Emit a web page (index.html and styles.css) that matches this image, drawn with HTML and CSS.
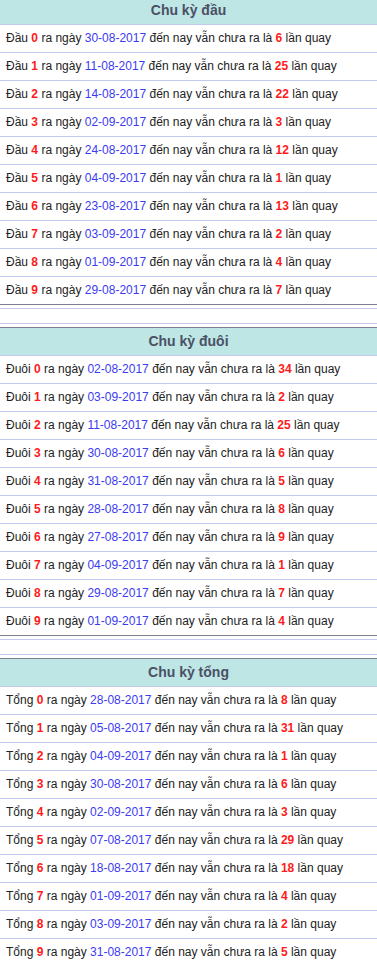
FILE: index.html
```html
<!DOCTYPE html>
<html lang="vi">
<head>
<meta charset="utf-8">
<title>Chu kỳ</title>
<link rel="stylesheet" href="styles.css">
</head>
<body>
<div class="page">
  <section class="cycle">
    <div class="cycle-head">Chu kỳ đầu</div>
    <div class="row">Đầu <b class="num">0</b> ra ngày <span class="date">30-08-2017</span> đến nay vẫn chưa ra là <b class="num">6</b> lần quay</div>
    <div class="row">Đầu <b class="num">1</b> ra ngày <span class="date">11-08-2017</span> đến nay vẫn chưa ra là <b class="num">25</b> lần quay</div>
    <div class="row">Đầu <b class="num">2</b> ra ngày <span class="date">14-08-2017</span> đến nay vẫn chưa ra là <b class="num">22</b> lần quay</div>
    <div class="row">Đầu <b class="num">3</b> ra ngày <span class="date">02-09-2017</span> đến nay vẫn chưa ra là <b class="num">3</b> lần quay</div>
    <div class="row">Đầu <b class="num">4</b> ra ngày <span class="date">24-08-2017</span> đến nay vẫn chưa ra là <b class="num">12</b> lần quay</div>
    <div class="row">Đầu <b class="num">5</b> ra ngày <span class="date">04-09-2017</span> đến nay vẫn chưa ra là <b class="num">1</b> lần quay</div>
    <div class="row">Đầu <b class="num">6</b> ra ngày <span class="date">23-08-2017</span> đến nay vẫn chưa ra là <b class="num">13</b> lần quay</div>
    <div class="row">Đầu <b class="num">7</b> ra ngày <span class="date">03-09-2017</span> đến nay vẫn chưa ra là <b class="num">2</b> lần quay</div>
    <div class="row">Đầu <b class="num">8</b> ra ngày <span class="date">01-09-2017</span> đến nay vẫn chưa ra là <b class="num">4</b> lần quay</div>
    <div class="row">Đầu <b class="num">9</b> ra ngày <span class="date">29-08-2017</span> đến nay vẫn chưa ra là <b class="num">7</b> lần quay</div>
  </section>
  <div class="sep"></div>
  <section class="cycle">
    <div class="cycle-head">Chu kỳ đuôi</div>
    <div class="row">Đuôi <b class="num">0</b> ra ngày <span class="date">02-08-2017</span> đến nay vẫn chưa ra là <b class="num">34</b> lần quay</div>
    <div class="row">Đuôi <b class="num">1</b> ra ngày <span class="date">03-09-2017</span> đến nay vẫn chưa ra là <b class="num">2</b> lần quay</div>
    <div class="row">Đuôi <b class="num">2</b> ra ngày <span class="date">11-08-2017</span> đến nay vẫn chưa ra là <b class="num">25</b> lần quay</div>
    <div class="row">Đuôi <b class="num">3</b> ra ngày <span class="date">30-08-2017</span> đến nay vẫn chưa ra là <b class="num">6</b> lần quay</div>
    <div class="row">Đuôi <b class="num">4</b> ra ngày <span class="date">31-08-2017</span> đến nay vẫn chưa ra là <b class="num">5</b> lần quay</div>
    <div class="row">Đuôi <b class="num">5</b> ra ngày <span class="date">28-08-2017</span> đến nay vẫn chưa ra là <b class="num">8</b> lần quay</div>
    <div class="row">Đuôi <b class="num">6</b> ra ngày <span class="date">27-08-2017</span> đến nay vẫn chưa ra là <b class="num">9</b> lần quay</div>
    <div class="row">Đuôi <b class="num">7</b> ra ngày <span class="date">04-09-2017</span> đến nay vẫn chưa ra là <b class="num">1</b> lần quay</div>
    <div class="row">Đuôi <b class="num">8</b> ra ngày <span class="date">29-08-2017</span> đến nay vẫn chưa ra là <b class="num">7</b> lần quay</div>
    <div class="row">Đuôi <b class="num">9</b> ra ngày <span class="date">01-09-2017</span> đến nay vẫn chưa ra là <b class="num">4</b> lần quay</div>
  </section>
  <div class="sep"></div>
  <section class="cycle">
    <div class="cycle-head">Chu kỳ tổng</div>
    <div class="row">Tổng <b class="num">0</b> ra ngày <span class="date">28-08-2017</span> đến nay vẫn chưa ra là <b class="num">8</b> lần quay</div>
    <div class="row">Tổng <b class="num">1</b> ra ngày <span class="date">05-08-2017</span> đến nay vẫn chưa ra là <b class="num">31</b> lần quay</div>
    <div class="row">Tổng <b class="num">2</b> ra ngày <span class="date">04-09-2017</span> đến nay vẫn chưa ra là <b class="num">1</b> lần quay</div>
    <div class="row">Tổng <b class="num">3</b> ra ngày <span class="date">30-08-2017</span> đến nay vẫn chưa ra là <b class="num">6</b> lần quay</div>
    <div class="row">Tổng <b class="num">4</b> ra ngày <span class="date">02-09-2017</span> đến nay vẫn chưa ra là <b class="num">3</b> lần quay</div>
    <div class="row">Tổng <b class="num">5</b> ra ngày <span class="date">07-08-2017</span> đến nay vẫn chưa ra là <b class="num">29</b> lần quay</div>
    <div class="row">Tổng <b class="num">6</b> ra ngày <span class="date">18-08-2017</span> đến nay vẫn chưa ra là <b class="num">18</b> lần quay</div>
    <div class="row">Tổng <b class="num">7</b> ra ngày <span class="date">01-09-2017</span> đến nay vẫn chưa ra là <b class="num">4</b> lần quay</div>
    <div class="row">Tổng <b class="num">8</b> ra ngày <span class="date">03-09-2017</span> đến nay vẫn chưa ra là <b class="num">2</b> lần quay</div>
    <div class="row">Tổng <b class="num">9</b> ra ngày <span class="date">31-08-2017</span> đến nay vẫn chưa ra là <b class="num">5</b> lần quay</div>
  </section>
</div>
</body>
</html>
```

FILE: styles.css
```css
html, body {
  margin: 0;
  padding: 0;
  background: #ffffff;
}

body {
  font-family: "Liberation Sans", Arial, sans-serif;
  font-size: 12px;
  color: #222222;
  overflow: hidden;
}

.page {
  margin-top: -4px;
}

.cycle {
  border-top: 1px solid #7c8190;
  border-bottom: 1px solid #7c8190;
}

.cycle-head {
  height: 27px;
  line-height: 27px;
  background: #bee6e4;
  border-bottom: 1px solid #c3c9ec;
  text-align: center;
  font-weight: bold;
  font-size: 14px;
  color: #4b5066;
}

.row {
  height: 27px;
  line-height: 27px;
  padding-left: 6px;
  border-bottom: 1px solid #c3c9ec;
  white-space: nowrap;
}

.row:last-child {
  border-bottom: none;
}

.num {
  color: #ff1a1a;
  font-weight: bold;
}

.date {
  color: #3b3bf0;
}

.sep {
  margin: 3px 0;
  height: 14px;
  border-top: 1px solid #c3c9ec;
  border-bottom: 1px solid #c3c9ec;
}
```
